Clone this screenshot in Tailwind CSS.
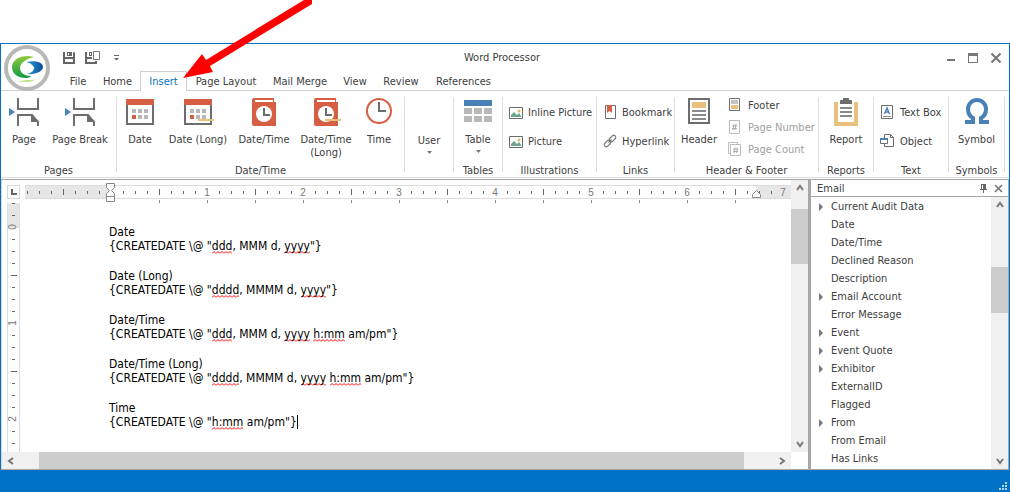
<!DOCTYPE html>
<html lang="en">
<head>
<meta charset="utf-8">
<title>Word Processor</title>
<script src="https://cdn.jsdelivr.net/npm/@tailwindcss/browser@4"></script>
</head>
<body class="relative flex h-screen min-h-[492px] flex-col bg-white pt-[43px] font-['DejaVu_Sans_Condensed','DejaVu_Sans',sans-serif] text-[11px] leading-[13px] text-[#404040]">

<div class="relative flex min-h-0 flex-1 flex-col border-x border-t border-[#0072c6]">
  <!-- Title bar -->
  <header class="grid h-[27px] grid-cols-[1fr_auto_1fr] items-center pr-[6px]">
    <div class="flex items-center gap-[8px] pl-[61px]">
      <button aria-label="Save"><svg width="14" height="14" viewBox="0 0 14 14" fill="#666"><path d="M1 1h2v5h8V1h1l1 1v11H1zM3 8v3h8V8z" fill-rule="evenodd"/><path d="M5 1h5v4H5z"/><path d="M6 2h1v2H6z" fill="#fff"/></svg></button>
      <button aria-label="Save as"><svg width="17" height="14" viewBox="0 0 17 14" fill="#666"><path d="M1 1h2v5h5v2H3v3h8v-1h2v3H1z"/><path d="M5 1h3v4H5z"/><path d="M6 2h1v2H6z" fill="#fff"/><path d="M9.500.500h6v8h-6z" fill="#fff" stroke="#777"/></svg></button>
      <button aria-label="Customize toolbar" class="pl-1"><svg width="7" height="14" viewBox="0 0 7 14" fill="#666"><path d="M1 4h5v1H1zM1 7h5L3.500 9.500z"/></svg></button>
    </div>
    <h1 class="text-center">Word Processor</h1>
    <div class="flex items-center justify-end gap-[10px]">
      <button aria-label="Minimize"><svg width="12" height="12" viewBox="0 0 12 12"><path d="M2 7h8v2H2z" fill="#777"/></svg></button>
      <button aria-label="Maximize"><svg width="12" height="12" viewBox="0 0 12 12"><path d="M1 1h10v10H1zM2 4v6h8V4z" fill="#777" fill-rule="evenodd"/></svg></button>
      <button aria-label="Close"><svg width="14" height="12" viewBox="0 0 14 12"><path d="M2.500 1.500l9 9M11.500 1.500l-9 9" stroke="#777" stroke-width="2.200"/></svg></button>
    </div>
  </header>

  <!-- Application button -->
  <button aria-label="Application menu" class="absolute left-[3px] top-px z-10">
    <svg width="46" height="46" viewBox="0 0 46 46">
      <defs>
        <linearGradient id="g1" x1="0" y1="0" x2="0" y2="1"><stop offset="0" stop-color="#93c93d"/><stop offset="1" stop-color="#0d9a45"/></linearGradient>
        <linearGradient id="g2" x1="0" y1="0" x2="1" y2="0"><stop offset="0" stop-color="#2aa0cf"/><stop offset="1" stop-color="#0a4d9b"/></linearGradient>
        <linearGradient id="g3" x1="0" y1="0" x2="1" y2="0"><stop offset="0" stop-color="#e4f3d2"/><stop offset=".6" stop-color="#b5dd80"/><stop offset="1" stop-color="#fff"/></linearGradient>
      </defs>
      <circle cx="23" cy="23" r="21" fill="#fff" stroke="#b8b8b8" stroke-width="4"/>
      <path d="M30 12C19 9 8 14 8 22c0 7 6 11 14 11 3 0 4-1 5-2-6 0-11-3-11-8 0-5 6-9 14-11z" fill="url(#g1)"/>
      <path d="M22 17c9-2 17 0 17 5 0 4-7 8-16 7 4-1 7-3 7-6 0-2-3-5-8-6z" fill="url(#g2)"/>
      <path d="M12 38c2-2 6-3 10-3 5 0 8 0 12-2-3 3-7 4-12 4-4 0-7 0-10 1z" fill="url(#g3)"/>
    </svg>
  </button>

  <!-- Ribbon tabs -->
  <nav class="flex h-[20px] items-stretch border-b border-[#d0d0d0] pl-[60px] leading-[22px]">
    <a href="#" class="w-[34px] text-center">File</a>
    <a href="#" class="w-[45px] text-center">Home</a>
    <a href="#" class="-mb-px w-[47px] border-x border-t border-[#d0d0d0] bg-white text-center leading-[20px] text-[#0072c6]">Insert</a>
    <a href="#" class="w-[78px] text-center">Page Layout</a>
    <a href="#" class="w-[70px] text-center">Mail Merge</a>
    <a href="#" class="w-[40px] text-center">View</a>
    <a href="#" class="w-[52px] text-center">Review</a>
    <a href="#" class="w-[73px] text-center">References</a>
  </nav>

  <svg class="hidden">
    <symbol id="i-page" viewBox="0 0 32 28"><g fill="none" stroke="#6d6d6d" stroke-width="2"><path d="M10 0v11h20V0M10 28V17h14l6 7v4"/></g><path d="M23 16l8 8h-8z" fill="#6d6d6d"/><path d="M1 10v8l6-4z" fill="#4a80b8"/></symbol>
    <symbol id="i-date" viewBox="0 0 28 28"><path d="M1 2h26v24H1z" fill="#fff" stroke="#6d6d6d" stroke-width="2"/><path d="M0 1h28v6H0zM6 17h4v4H6z" fill="#d65f43"/><path d="M12 11h4v4h-4zM18 11h4v4h-4zM6 11h4v4H6zM12 17h4v4h-4zM18 17h4v4h-4z" fill="#b8b8b8"/></symbol>
    <symbol id="i-book" viewBox="0 0 28 28"><path d="M4 0h20v2H5v2h21v24H4q-2 0-2-2V2q0-2 2-2z" fill="#d65f43"/><path d="M23 2h1v2h-1z" fill="#d65f43"/><circle cx="14" cy="16" r="8" fill="#fff"/><path d="M14 10v7h6" fill="none" stroke="#6d6d6d" stroke-width="2"/></symbol>
    <symbol id="i-pic" viewBox="0 0 14 12"><path d="M.500.500h13v11H.500z" fill="#fff" stroke="#6d6d6d"/><path d="M2 10V8l3-3 3 3 2-2 2 3v1z" fill="#6da68c"/><circle cx="10" cy="4" r="1.500" fill="#e8b86a"/></symbol>
    <symbol id="i-num" viewBox="0 0 12 14"><path d="M.500.500h10v13H.500z" fill="#fff" stroke="#bdbdbd"/><path d="M5 4L4 10M7 4L6 10M3 6h5M3 8.500h5" stroke="#b0b0b0"/></symbol>
  </svg>

  <!-- Ribbon -->
  <div class="flex h-[87px] border-b border-[#dcdcdc]">
    <section class="flex w-[115px] flex-col">
      <div class="flex flex-1 items-start pt-[7px]">
        <button class="flex w-[46px] flex-col items-center gap-[7px]"><svg width="32" height="28"><use href="#i-page"/></svg>Page</button>
        <button class="flex w-[66px] flex-col items-center gap-[7px]"><svg width="32" height="28"><use href="#i-page"/></svg>Page Break</button>
      </div><h2 class="text-center">Pages</h2>
    </section>
    <div class="mt-[6px] h-[75px] w-px bg-[#dedede]"></div>
    <section class="flex w-[287px] flex-col">
      <div class="flex flex-1 items-start pt-[7px]">
        <button class="flex w-[46px] flex-col items-center gap-[7px]"><svg width="28" height="28"><use href="#i-date"/></svg>Date</button>
        <button class="flex w-[70px] flex-col items-center gap-[7px]"><svg width="28" height="28" class="overflow-visible"><use href="#i-date"/><path d="M14 21h16v2H14z" fill="#e9c17d"/></svg>Date (Long)</button>
        <button class="flex w-[62px] flex-col items-center gap-[7px]"><svg width="28" height="28"><use href="#i-book"/></svg>Date/Time</button>
        <button class="flex w-[62px] flex-col items-center gap-[7px]"><svg width="28" height="28" class="overflow-visible"><use href="#i-book"/><path d="M13 21h16v2H13z" fill="#e9c17d"/></svg>Date/Time (Long)</button>
        <button class="flex w-[44px] flex-col items-center gap-[7px]"><svg width="28" height="28" viewBox="0 0 28 28" fill="none"><circle cx="14" cy="13" r="12" stroke="#d65f43" stroke-width="2"/><path d="M14 4v9h7" stroke="#6d6d6d" stroke-width="2"/></svg>Time</button>
      </div><h2 class="text-center">Date/Time</h2>
    </section>
    <div class="mt-[6px] h-[75px] w-px bg-[#dedede]"></div>
    <section class="flex w-[48px] flex-col items-center pt-[43px]">
      <button class="flex flex-col items-center gap-1">User<svg width="5" height="3"><path d="M0 0h5L2.500 3z" fill="#777"/></svg></button>
    </section>
    <div class="mt-[6px] h-[75px] w-px bg-[#dedede]"></div>
    <section class="flex w-[48px] flex-col items-center">
      <button class="flex flex-1 flex-col items-center pt-[9px]"><svg width="28" height="22" fill="#b8b8b8"><path d="M0 0h28v6H0z" fill="#4a80b8"/><path d="M0 8h8v6H0zM10 8h8v6h-8zM20 8h8v6h-8zM0 16h8v6H0zM10 16h8v6h-8zM20 16h8v6h-8z"/></svg><span class="mt-[11px]">Table</span><svg class="mt-1" width="5" height="3"><path d="M0 0h5L2.500 3z" fill="#777"/></svg></button>
      <h2>Tables</h2>
    </section>
    <div class="mt-[6px] h-[75px] w-px bg-[#dedede]"></div>
    <section class="flex w-[93px] flex-col">
      <div class="flex flex-1 flex-col items-start gap-4 pl-[6px] pt-[15px]">
        <button class="flex items-center gap-[5px] whitespace-nowrap"><svg width="14" height="12"><use href="#i-pic"/></svg>Inline Picture</button>
        <button class="flex items-center gap-[5px] whitespace-nowrap"><svg width="14" height="12"><use href="#i-pic"/></svg>Picture</button>
      </div><h2 class="text-center">Illustrations</h2>
    </section>
    <div class="mt-[6px] h-[75px] w-px bg-[#dedede]"></div>
    <section class="flex w-[77px] flex-col">
      <div class="flex flex-1 flex-col items-start gap-[15px] pl-[6px] pt-[14px]">
        <button class="flex items-center gap-[5px]"><svg width="14" height="14"><path d="M2.500.500h10v13h-10z" fill="#fff" stroke="#6d6d6d"/><path d="M4 0h5v8L6.500 6 4 8z" fill="#d65f43"/></svg>Bookmark</button>
        <button class="flex items-center gap-[5px]"><svg width="14" height="14" fill="none" stroke="#777" stroke-width="1.200"><rect x="-3.700" y="-2" width="7.400" height="4" rx="2" transform="translate(9.500 4.500) rotate(-45)"/><rect x="-3.700" y="-2" width="7.400" height="4" rx="2" transform="translate(4.500 9.500) rotate(-45)"/><path d="M5.500 8.500l3-3"/></svg>Hyperlink</button>
      </div><h2 class="text-center">Links</h2>
    </section>
    <div class="mt-[6px] h-[75px] w-px bg-[#dedede]"></div>
    <section class="flex w-[143px] flex-col">
      <div class="flex flex-1 items-start pt-[7px]">
        <button class="flex w-[48px] flex-col items-center gap-[7px]"><svg width="22" height="28"><path d="M1 1h20v24H1z" fill="#fff" stroke="#6d6d6d" stroke-width="2"/><path d="M4 4h14v6H4z" fill="#e9c17d"/><path d="M4 13h14M4 17h14M4 21h14" stroke="#8a8a8a" stroke-width="2"/></svg>Header</button>
        <div class="flex flex-col items-start gap-2 pl-[6px]">
          <button class="flex items-center gap-[7px]"><svg width="12" height="14"><path d="M.500.500h10v12H.500z" fill="#fff" stroke="#6d6d6d"/><path d="M2 3h7M2 5h7" stroke="#888"/><path d="M2 7h7v4H2z" fill="#e9c17d"/></svg>Footer</button>
          <button class="flex items-center gap-[7px] whitespace-nowrap text-[#a0a0a0]" disabled><svg width="12" height="14"><use href="#i-num"/></svg>Page Number</button>
          <button class="flex items-center gap-[7px] whitespace-nowrap text-[#a0a0a0]" disabled><svg width="12" height="14" class="overflow-visible"><path d="M-.500.500h9v11h-9z" fill="#fff" stroke="#bdbdbd"/><path d="M1.500 2.500h10v11h-10z" fill="#fff" stroke="#bdbdbd"/><path d="M6 5.500L5 11M8.500 5.500L7.500 11M4 7h5M4 9.500h5" stroke="#b0b0b0"/></svg>Page Count</button>
        </div>
      </div><h2 class="text-center">Header &amp; Footer</h2>
    </section>
    <div class="mt-[6px] h-[75px] w-px bg-[#dedede]"></div>
    <section class="flex w-[54px] flex-col">
      <button class="flex flex-1 flex-col items-center gap-[7px] pt-[7px]"><svg width="24" height="28"><path d="M2 4v22h20V4" fill="#fff" stroke="#e9c17d" stroke-width="4"/><path d="M6 6V3q0-1 1-1h2V0h6v2h2q1 0 1 1v3z" fill="#6d6d6d"/><path d="M6 10h12M6 14h12M6 18h12" stroke="#8a8a8a" stroke-width="2"/></svg>Report</button>
      <h2 class="text-center">Reports</h2>
    </section>
    <div class="mt-[6px] h-[75px] w-px bg-[#dedede]"></div>
    <section class="flex w-[74px] flex-col">
      <div class="flex flex-1 flex-col items-start gap-[15px] pl-[6px] pt-[14px]">
        <button class="flex items-center gap-[6px] whitespace-nowrap"><svg width="14" height="14"><path d="M1.500.500h11v13h-11z" fill="#fff" stroke="#6d6d6d"/><path d="M4.500 9L7 3l2.500 6M5.500 7h3" stroke="#4a80b8" stroke-width="1.500" fill="none"/><path d="M3 11.500h8" stroke="#888"/></svg>Text Box</button>
        <button class="flex items-center gap-[6px]"><svg width="14" height="14" fill="#fff" stroke="#6d6d6d"><path d="M4.500.500h6l3 3v9h-9z"/><path d="M10.500.500v3h3" fill="none"/><path d="M.500 4.500h7v5h-7z"/><path d="M0 5h8" stroke="#4a80b8" stroke-width="2"/></svg>Object</button>
      </div><h2 class="text-center">Text</h2>
    </section>
    <div class="mt-[6px] h-[75px] w-px bg-[#dedede]"></div>
    <section class="flex w-[55px] flex-col">
      <button class="flex flex-1 flex-col items-center gap-[7px] pt-[7px]"><svg width="24" height="28" viewBox="0 0 24 28"><path d="M0 24h8v-4C4 18 3 15 3 11 3 6 7 2 12 2s9 4 9 9c0 4-1 7-5 9v4h8" fill="none" stroke="#4a80b8" stroke-width="4"/></svg>Symbol</button>
      <h2 class="text-center">Symbols</h2>
    </section>
    <div class="mt-[6px] h-[75px] w-px bg-[#dedede]"></div>
  </div>

  <!-- Workspace -->
  <main class="mt-px flex min-h-0 flex-1 border-y border-r border-[#a6a6a6]">
    <div class="flex min-w-0 flex-1 border-l border-[#d8d8d8]">
      <div class="flex min-w-0 flex-1 flex-col">
        <div class="flex h-[23px] pl-[5px] pt-[5px]">
          <button aria-label="Tab stop" class="flex h-[14px] w-[13px] items-center justify-center border border-[#d8d8d8]"><svg width="6" height="6"><path d="M1 0v5h5" fill="none" stroke="#666" stroke-width="2"/></svg></button>
          <svg id="hruler" class="ml-[5px] h-[18px] min-w-0 flex-1 overflow-visible font-['Liberation_Sans',sans-serif] text-[10px]"></svg>
        </div>
        <div class="flex min-h-0 flex-1 pl-[5px]">
          <svg id="vruler" class="h-full w-[13px] shrink-0 font-['Liberation_Sans',sans-serif] text-[10px]"></svg>
          <div contenteditable="true" spellcheck="false" role="textbox" aria-multiline="true" aria-label="Document" class="flex min-w-0 flex-1 flex-col gap-4 overflow-hidden pl-[89px] pt-[22px] text-[12px] leading-[14px] whitespace-nowrap text-black outline-none">
            <p>Date<br>{CREATEDATE \@ "<u>ddd</u>, MMM d, <u>yyyy</u>"}</p>
            <p>Date (Long)<br>{CREATEDATE \@ "<u>dddd</u>, MMMM d, <u>yyyy</u>"}</p>
            <p>Date/Time<br>{CREATEDATE \@ "<u>ddd</u>, MMM d, <u>yyyy</u> <u>h:mm</u> am/pm"}</p>
            <p>Date/Time (Long)<br>{CREATEDATE \@ "<u>dddd</u>, MMMM d, <u>yyyy</u> <u>h:mm</u> am/pm"}</p>
            <p>Time<br>{CREATEDATE \@ "<u>h:mm</u> am/pm"}<span class="border-r border-black"></span></p>
          </div>
        </div>
        <div class="flex h-[17px] items-center bg-[#f0f0f0]">
          <div class="w-[37px] pl-[5px]"><svg width="7" height="8"><path d="M6 1L2 4l4 3" fill="none" stroke="#777" stroke-width="2"/></svg></div>
          <div class="h-full flex-1 bg-[#cdcdcd]"></div>
          <div class="flex w-[47px] justify-end pr-[5px]"><svg width="7" height="8"><path d="M1 1l4 3-4 3" fill="none" stroke="#777" stroke-width="2"/></svg></div>
        </div>
      </div>
      <div class="flex w-[17px] flex-col pb-[17px]">
        <div class="flex h-full flex-col items-center bg-[#f0f0f0]">
          <div class="h-[29px] pt-1"><svg width="8" height="7"><path d="M1 6l3-4 3 4" fill="none" stroke="#777" stroke-width="2"/></svg></div>
          <div class="h-[55px] w-full bg-[#cdcdcd]"></div>
          <svg class="mb-1 mt-auto" width="8" height="7"><path d="M1 1l3 4 3-4" fill="none" stroke="#777" stroke-width="2"/></svg>
        </div>
      </div>
    </div>
    <div class="w-[3px] bg-[#a6a6a6]"></div>
    <aside class="flex w-[197px] flex-col">
      <div class="flex h-[17px] items-center border-b border-[#a6a6a6] pl-[6px] pr-[5px]">
        <h2 class="flex-1">Email</h2>
        <button aria-label="Pin"><svg width="9" height="9"><path d="M2 0h5v5h1v1H5v3H4V6H1V5h1z" fill="#666"/><path d="M3 1h1v4H3z" fill="#fff"/></svg></button>
        <button aria-label="Close panel" class="ml-[6px]"><svg width="9" height="9"><path d="M1 1l7 7M8 1L1 8" stroke="#777" stroke-width="1.600"/></svg></button>
      </div>
      <div class="flex min-h-0 flex-1">
        <ul id="fields" class="min-w-0 flex-1 overflow-hidden pt-px leading-[18px]"></ul>
        <div class="flex w-[17px] flex-col items-center bg-[#f0f0f0]">
          <div class="h-[70px] pt-1"><svg width="8" height="7"><path d="M1 6l3-4 3 4" fill="none" stroke="#777" stroke-width="2"/></svg></div>
          <div class="h-[46px] w-full bg-[#cdcdcd]"></div>
          <svg class="mb-1 mt-auto" width="8" height="7"><path d="M1 1l3 4 3-4" fill="none" stroke="#777" stroke-width="2"/></svg>
        </div>
      </div>
    </aside>
  </main>

  <!-- Status bar -->
  <footer class="flex h-[22px] items-end justify-end bg-[#0072c6] p-[2px]">
    <svg width="8" height="8" fill="#b5d3ea"><path d="M6 0h2v2H6zM3 3h2v2H3zM6 3h2v2H6zM0 6h2v2H0zM3 6h2v2H3zM6 6h2v2H6z"/></svg>
  </footer>
</div>

<!-- Callout arrow -->
<svg class="pointer-events-none absolute left-0 top-0 z-20" width="312" height="84"><path d="M304 0h8v4L210 66l3 6-30 6 19-24 4 6z" fill="#f00"/></svg>

<script>
  // Field list
  const fields = ['>Current Audit Data','Date','Date/Time','Declined Reason','Description','>Email Account','Error Message','>Event','>Event Quote','>Exhibitor','ExternalID','Flagged','>From','From Email','Has Links'];
  document.getElementById('fields').innerHTML = fields.map(f =>
    `<li class="flex h-[18px] items-center pl-2"><span class="w-3"><svg width="5" height="8">${f[0] === '>' ? '<path d="M0 0v8l4-4z" fill="#777"/>' : ''}</svg></span>${f.replace('>', '')}</li>`).join('');

  // Misspelling marks
  document.querySelectorAll('u').forEach(u => u.className = "no-underline pb-px bg-[url('data:image/svg+xml,%3Csvg%20xmlns=%22http://www.w3.org/2000/svg%22%20width=%224%22%20height=%223%22%3E%3Cpath%20d=%22M0%202.500L2%20.500L4%202.500%22%20fill=%22none%22%20stroke=%22red%22/%3E%3C/svg%3E')] bg-repeat-x bg-bottom-left");

  // Horizontal ruler: 96px per inch, 12px per tick
  let h = '<path d="M0 0h85v14H0zM731 0h35v14H731z" fill="#e6e6e6"/><path d="M0 .5h766M0 13.5h766" stroke="#dcdcdc"/>';
  for (let x = 2, n = -7; x < 766; x += 12, n++) {
    if (n === 0) continue;
    if (n > 0 && n % 8 === 0) h += `<text x="${86 + n * 12}" y="11" text-anchor="middle" fill="#777">${n / 8}</text>`;
    else h += n % 4 === 0 ? `<path d="M${x} 4h1v6h-1z" fill="#666"/>` : `<path d="M${x} 6h1v3h-1z" fill="#666"/>`;
    if (n >= 4 && n % 4 === 0 && x < 720) h += `<path d="M${x} 15h1v3h-1z" fill="#888"/>`;
  }
  h += '<path d="M81.500 -1.500h8v4l-3 3 3 3v8h-8v-8l3-3-3-3z" fill="#fff" stroke="#888"/><path d="M81.500 11.500h8" stroke="#888"/><path d="M727.500 12.500v-3l4-4 4 4v3z" fill="#fff" stroke="#888"/>';
  document.getElementById('hruler').innerHTML = h;

  // Vertical ruler
  let v = '<path d="M0 0h13v25H0z" fill="#e6e6e6"/><path d="M.5 0v600M12.500 0v600" stroke="#dcdcdc"/>';
  for (let y = 0, n = -2; y < 250; y += 12, n++) {
    if (n >= 0 && n % 8 === 0) v += `<text transform="translate(9 ${y}) rotate(-90)" text-anchor="middle" fill="#777">${n / 8}</text>`;
    else v += n % 4 === 0 ? `<path d="M4 ${y}h6v1H4z" fill="#666"/>` : `<path d="M5 ${y}h3v1H5z" fill="#666"/>`;
  }
  document.getElementById('vruler').innerHTML = v;
</script>
</body>
</html>
